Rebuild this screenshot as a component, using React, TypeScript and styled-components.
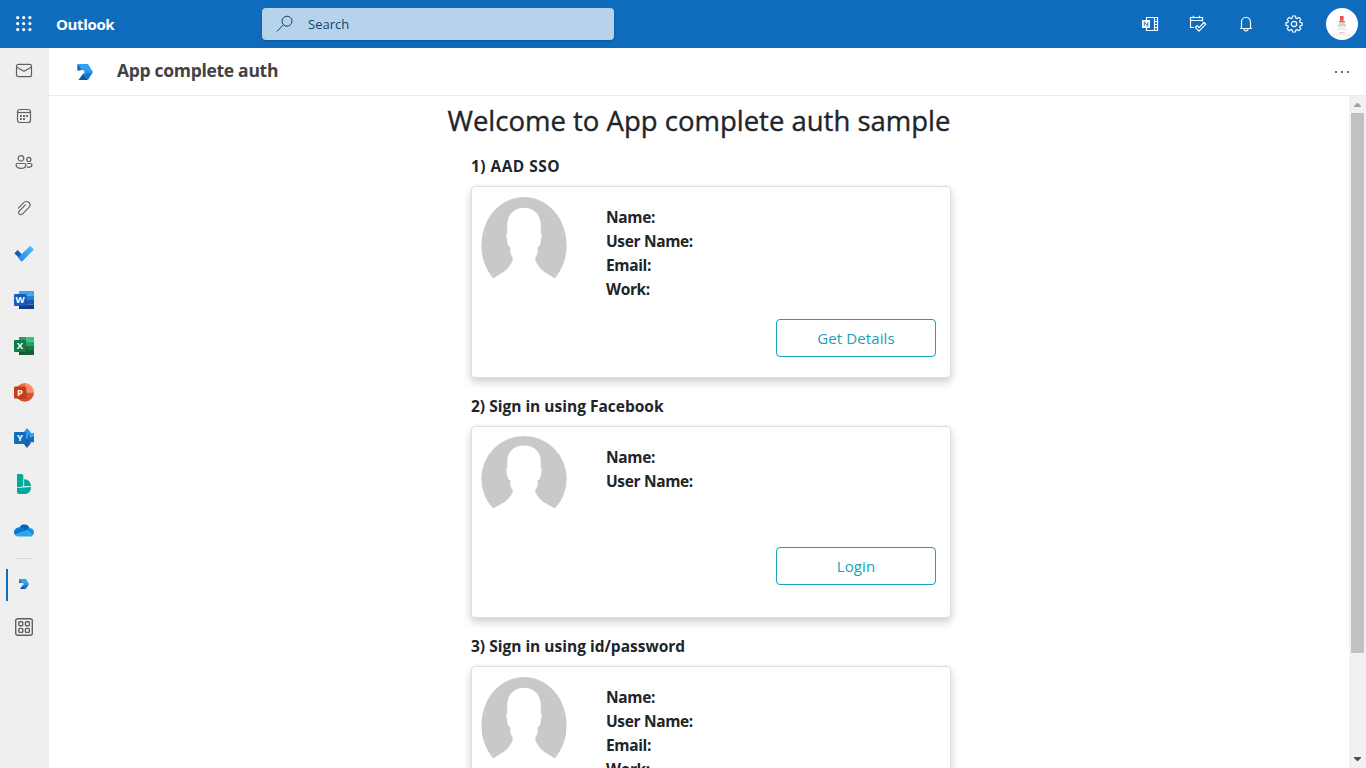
import React from 'react';
import styled, { createGlobalStyle } from 'styled-components';

const Global = createGlobalStyle`
  *, *::before, *::after { box-sizing: border-box; }
  body { margin: 0; overflow: hidden; font-family: "Open Sans", "Noto Sans", sans-serif; color: #212529; background: #fff; }
  svg { display: block; flex: none; }
`;

const Page = styled.div`
  display: flex;
  flex-direction: column;
  width: 1366px;
  height: 768px;
  overflow: hidden;
`;

const Text = styled.span<{ $spacing?: number }>`
  letter-spacing: ${(p) => p.$spacing ?? 0}px;
  white-space: nowrap;
`;

const TopBar = styled.header`
  display: flex;
  align-items: center;
  height: 48px;
  flex: none;
  background: #0f6cbd;
  color: #fff;
`;

const Launcher = styled.div`
  display: flex;
  align-items: center;
  justify-content: center;
  width: 48px;
  height: 48px;
`;

const Brand = styled.div`
  width: 214px;
  padding-left: 8px;
  font-size: 15px;
  font-weight: 700;
  line-height: 22px;
`;

const SearchBox = styled.div`
  display: flex;
  align-items: center;
  gap: 14px;
  width: 352px;
  height: 32px;
  padding-left: 14px;
  border-radius: 4px;
  background: #b7d3eb;
  box-shadow: 0 1px 3px rgba(0, 0, 0, 0.22);
  color: #0f4470;
  font-size: 13px;
  line-height: 20px;
`;

const TopActions = styled.div`
  display: flex;
  margin-left: auto;
  align-items: center;
`;

const TopButton = styled.div`
  display: flex;
  align-items: center;
  justify-content: center;
  width: 48px;
  height: 48px;
`;

const Body = styled.div`
  display: flex;
  flex: 1;
  min-height: 0;
`;

const Rail = styled.nav`
  display: flex;
  flex-direction: column;
  width: 49px;
  flex: none;
  background: #efefef;
  color: #616161;
`;

const RailItem = styled.div<{ $height?: number; $active?: boolean }>`
  display: flex;
  align-items: center;
  justify-content: center;
  flex: none;
  width: 48px;
  height: ${(p) => p.$height ?? 46}px;
  ${(p) => p.$active && `
    width: 42px;
    margin-left: 6px;
    padding: 0 8px 2px 0;
    border-left: 2px solid #0f6cbd;
  `}
`;

const RailDivider = styled.div`
  width: 16px;
  height: 1px;
  flex: none;
  margin: 5px 0 10px 16px;
  background: #d8d8d8;
`;

const Main = styled.main`
  display: flex;
  flex-direction: column;
  flex: 1;
  min-width: 0;
`;

const TitleBar = styled.div`
  display: flex;
  align-items: center;
  height: 48px;
  flex: none;
  padding: 0 16px 0 28px;
  border-bottom: 1px solid #ebebeb;
  color: #424242;
`;

const AppTitle = styled.h1`
  margin: -3px auto 0 24px;
  font-size: 17.5px;
  font-weight: 700;
  line-height: 24px;
`;

const Viewport = styled.div`
  display: flex;
  flex: 1;
  min-height: 0;
`;

const Content = styled.div`
  flex: 1;
  height: 672px;
  overflow: hidden;
`;

const Heading = styled.h2`
  margin: 0;
  padding-top: 8px;
  height: 58px;
  font-size: 27.5px;
  font-weight: 500;
  line-height: 34px;
  text-align: center;
  -webkit-text-stroke: 0.35px #212529;
`;

const Section = styled.section`
  width: 480px;
  margin: 0 0 16px 422px;
`;

const SectionTitle = styled.h3`
  margin: 0 0 8px;
  font-size: 15.5px;
  font-weight: 700;
  line-height: 24px;
`;

const Card = styled.div`
  display: flex;
  flex-direction: column;
  height: 192px;
  border: 1px solid #dfdfdf;
  border-radius: 4px;
  background: #fff;
  box-shadow: 0 4px 8px rgba(0, 0, 0, 0.2);
`;

const CardTop = styled.div<{ $height: number }>`
  display: flex;
  flex: none;
  height: ${(p) => p.$height}px;
  padding-left: 9px;
`;

const AvatarSlot = styled.div<{ $top: number }>`
  width: 125px;
  padding-top: ${(p) => p.$top}px;
`;

const Fields = styled.div`
  display: flex;
  flex-direction: column;
  padding-top: 18px;
  font-size: 15.5px;
  font-weight: 700;
  line-height: 24px;
`;

const OutlineButton = styled.button`
  align-self: flex-end;
  width: 160px;
  height: 38px;
  margin-right: 14px;
  padding: 0;
  border: 1px solid #17a2b8;
  border-radius: 4px;
  background: transparent;
  color: #17a2b8;
  font: 400 15px/24px "Open Sans", sans-serif;
`;

const ScrollTrack = styled.div`
  display: flex;
  flex-direction: column;
  align-items: center;
  justify-content: space-between;
  width: 17px;
  background: #f1f1f1;
`;

const ScrollThumb = styled.div`
  width: 13px;
  height: 540px;
  margin-bottom: auto;
  background: #c1c1c1;
`;

const ScrollArrow = ({ down }: { down?: boolean }) => (
  <svg width="17" height="17" viewBox="0 0 17 17">
    {down ? <path d="M5 6h7v1L9 10H8L5 7z" fill="#505050" /> : <path d="M5 11h7v-1L9 7H8l-3 3z" fill="#a3a3a3" />}
  </svg>
);

const Silhouette = ({ height }: { height: number }) => (
  <svg width="86" height={height} viewBox="-1 0 258 242" preserveAspectRatio="none">
    <ellipse cx="128" cy="144" rx="128" ry="144" fill="#c9c9c9" />
    <path
      d="M36 243L58 229Q72 222 80 212Q88 202 94 190V180Q89 176 87 164V149L82 147Q76 134 75 112L78 106Q76 76 81 64Q92 32 128 32Q164 32 175 64Q180 76 178 106L181 112Q180 134 174 147L169 149V164Q167 176 162 180V190Q168 202 176 212Q184 222 198 229L220 243Z"
      fill="#fff"
    />
  </svg>
);

const LauncherIcon = () => (
  <svg width="16" height="16" viewBox="0 0 16 16" fill="#fff">
    {[1.6, 7.6, 13.6].map((y) => [1.7, 7.7, 13.9].map((x) => <circle key={`${x}-${y}`} cx={x} cy={y} r="1.6" />))}
  </svg>
);

const SearchIcon = () => (
  <svg width="18" height="18" viewBox="0 0 18 18" fill="none" stroke="#0f4470" strokeWidth="1">
    <circle cx="11" cy="6.2" r="5" />
    <path d="M7.3 9.9L.8 16.5" />
  </svg>
);

const NotebookIcon = () => (
  <svg width="18" height="16" viewBox="0 0 18 16">
    <path d="M5.5 4V1.5h11v13h-11V12M13.5 1.5v13M13.5 5.5h3M13.5 8.5h3M13.5 11.5h3" fill="none" stroke="#fff" strokeWidth="1.2" />
    <path d="M1 4h8v8H1z" fill="#fff" />
    <path d="M3.3 10V6l3.4 4V6" fill="none" stroke="#4a8fd0" strokeWidth="1.1" />
  </svg>
);

const DayIcon = () => (
  <svg width="18" height="18" viewBox="0 0 18 18" fill="none" stroke="#fff" strokeWidth="1.2">
    <path d="M5 12.5H1.5v-10h12v4M1.5 5.5h12M4.5 .8v2.5M10.5 .8v2.5" />
    <path d="M6.3 12.4l1.7-1.8 2 2 5-5.1 1.8 1.7-6.8 7z" strokeLinejoin="round" />
  </svg>
);

const BellIcon = () => (
  <svg width="16" height="16" viewBox="0 0 16 16" fill="none" stroke="#fff" strokeWidth="1.15">
    <path d="M3.5 12V6a4.5 4.8 0 0 1 9 0v6M2 12.5h12M6 13a2 1.8 0 0 0 4 0" />
  </svg>
);

const GearIcon = () => (
  <svg width="18" height="18" viewBox="0 0 18 18" fill="none" stroke="#fff" strokeWidth="1.2" strokeLinejoin="round">
    <path d="M7.6 1h2.8l.5 2.1 1.1.5 1.9-1.2 1.9 1.9-1.2 1.9.5 1.1 2 .5v2.5l-2 .5-.5 1.1 1.2 1.9-1.9 1.9-1.9-1.2-1.1.5-.5 2H7.6l-.5-2-1.1-.5-1.9 1.2-1.9-1.9 1.2-1.9-.5-1.1-2-.5V7.8l2-.5.5-1.1-1.2-1.9 1.9-1.9L6 3.6l1.1-.5z" />
    <circle cx="9" cy="9" r="2.7" />
  </svg>
);

const ProfilePicture = () => (
  <svg width="32" height="32" viewBox="0 0 32 32">
    <circle cx="16" cy="16" r="16" fill="#fff" />
    <path d="M14 8h3.6v4.8H14z" fill="#f05252" />
    <path d="M13 13.6h6" stroke="#6b6563" strokeWidth=".9" />
    <path d="M13.5 14h5l.5 3h-6z" fill="#d6d0cb" />
    <path d="M13.5 17l-1 4h7l-1-4z" fill="#f3ede9" />
    <path d="M12.3 18.5l1-2M19.5 18.5l-1-2" stroke="#98918d" strokeWidth=".8" />
    <path d="M15.3 17.6h1.6" stroke="#c9a878" strokeWidth=".9" />
    <path d="M10.5 21.5h11M7 27h18" stroke="#e2dfe1" strokeWidth=".8" />
    <path d="M13 24.9h6" stroke="#f6b0b0" strokeWidth="1.1" />
  </svg>
);

const MailIcon = () => (
  <svg width="18" height="15" viewBox="0 0 18 15" fill="none" stroke="currentColor" strokeWidth="1.2">
    <rect x="1.5" y="1.3" width="15" height="12.4" rx="2" />
    <path d="M1.7 4.3L9 8.2l7.3-3.9" />
  </svg>
);

const CalendarIcon = () => (
  <svg width="16" height="16" viewBox="0 0 16 16" fill="none" stroke="currentColor" strokeWidth="1.2">
    <rect x="1.5" y="1.5" width="13" height="13" rx="2.3" />
    <path d="M1.5 4.5h13" />
    <path d="M4 8h1.8M7.1 8h1.8M10.2 8H12M4 11h1.8M7.1 11h1.8" strokeWidth="1.8" />
  </svg>
);

const PeopleIcon = () => (
  <svg width="18" height="16" viewBox="0 0 18 16" fill="none" stroke="currentColor" strokeWidth="1.2">
    <circle cx="6" cy="4.4" r="2.8" />
    <circle cx="13.8" cy="5.4" r="2.1" />
    <path d="M2.4 9.5h7.2c.8 0 1.3.5 1.3 1.2 0 2.5-2.2 3.7-4.9 3.7s-4.9-1.2-4.9-3.7c0-.7.5-1.2 1.3-1.2zM12 9.5h3.7c.8 0 1.3.4 1.3 1.1 0 1.6-1.3 2.7-3.2 2.7-.8 0-1.5-.2-2-.5" />
  </svg>
);

const ClipIcon = () => (
  <svg width="16" height="16" viewBox="0 0 16 16" fill="none" stroke="currentColor" strokeWidth="1.15" strokeLinecap="round">
    <path d="M2.3 8.1l5.2-5.3c1.8-1.8 4.3-1.6 5.5-.3 1.3 1.3 1.3 3.4 0 4.9l-6.4 6.5c-1.1 1.1-2.5 1-3.3.2-.8-.9-.8-2.2.1-3.2l6-6.1" />
  </svg>
);

const TodoIcon = () => (
  <svg width="20" height="16" viewBox="0 0 20 16">
    <path d="M.4 7.3l3.2-3.2 6.7 6.7-3.2 3.2z" fill="#185abd" />
    <path d="M4 11.6L15.6.4c.4-.3.8-.3 1.2 0l2.6 2.5c.4.4.4.8 0 1.2L8.3 15.2c-.4.4-.8.4-1.2 0z" fill="url(#todoGradient)" />
    <defs>
      <linearGradient id="todoGradient" x1="5" y1="14" x2="18" y2="1" gradientUnits="userSpaceOnUse">
        <stop stopColor="#2787e5" />
        <stop offset="1" stopColor="#50b8fb" />
      </linearGradient>
    </defs>
  </svg>
);

const Letter = styled.text`
  font: 700 9.5px "Open Sans", sans-serif;
  fill: #fff;
  text-anchor: middle;
`;

const WordIcon = () => (
  <svg width="20" height="18" viewBox="0 0 20 18">
    <path d="M5 0h15v4.6H5z" fill="#41a5ee" />
    <path d="M5 4.6h15V9H5z" fill="#2b7cd3" />
    <path d="M5 9h15v4.5H5z" fill="#185abd" />
    <path d="M5 13.5h15V18H5z" fill="#103f91" />
    <path d="M10 3.5h2.7v12H5v-1h5z" fill="#0b3274" opacity=".4" />
    <rect y="3" width="12" height="12" rx="1" fill="#185abd" />
    <Letter x="6" y="12.4">W</Letter>
  </svg>
);

const ExcelIcon = () => (
  <svg width="20" height="18" viewBox="0 0 20 18">
    <path d="M5 0h7.5v9H5z" fill="#21a366" />
    <path d="M12.5 0H20v4.6h-7.5z" fill="#33c481" />
    <path d="M12.5 4.6H20V9h-7.5z" fill="#21a366" />
    <path d="M5 9h15v9H5z" fill="#185c37" />
    <path d="M12.5 9H20v4.5h-7.5z" fill="#107c41" />
    <path d="M10 3.5h2.7v12H5v-1h5z" fill="#0b4527" opacity=".4" />
    <rect y="3" width="12" height="12" rx="1" fill="#107c41" />
    <Letter x="6" y="12.4">X</Letter>
  </svg>
);

const PowerPointIcon = () => (
  <svg width="20" height="19" viewBox="0 0 20 19">
    <path d="M11 0a9.4 9.4 0 0 1 9 9.5h-9z" fill="#ff8f6b" />
    <path d="M11 0v9.5H1.5A9.5 9.5 0 0 1 11 0z" fill="#ed6c47" />
    <path d="M1.5 9.5H20a9.25 9.25 0 0 1-18.5 0z" fill="#d35230" />
    <path d="M10 4h2.7v12H4v-1h6z" fill="#7c2411" opacity=".35" />
    <rect y="3.5" width="12" height="12" rx="1" fill="#c43e1c" />
    <Letter x="6" y="12.9">P</Letter>
  </svg>
);

const VivaIcon = () => (
  <svg width="20" height="20" viewBox="0 0 20 20">
    <path d="M9 5l4-5 4 4.4-4 5.6z" fill="#2b9ae8" />
    <path d="M13 9.5L16 5.2h3.5q.5 0 .5.5v8q0 .5-.5.5H16z" fill="#0f6fc5" />
    <path d="M16 5.2h3.5L20 6v2l-4.5 2z" fill="#3aa0ed" />
    <path d="M9 15l4-5.5 4 5.5-4 5z" fill="#1b5ea9" />
    <rect y="4" width="12" height="12" rx="1" fill="#106ebe" />
    <Letter x="6" y="13.4">Y</Letter>
  </svg>
);

const BookingsIcon = () => (
  <svg width="16" height="20" viewBox="0 0 16 20" fill="#00a99d">
    <path d="M1 0h4.7A1.6 1.6 0 0 1 7.3 1.6V12.2L1 13.4z" />
    <path d="M1 14l14-1.1c0 4.3-2.9 7.1-6.5 7.1H3a2 2 0 0 1-2-2z" />
    <path d="M8.1 5.2c3.8 0 6.5 2.5 6.9 6.8l-6.9.2z" />
  </svg>
);

const OneDriveIcon = () => (
  <svg width="20" height="14" viewBox="0 0 20 14">
    <path d="M5.5 4.2A5.6 5.6 0 0 1 15.6 5L9.8 9z" fill="#0364b8" />
    <path d="M5.5 4.2C2.2 4.5 0 6.8 0 9.2c0 1.1.4 2.1 1 2.8l11-4.6C10.4 5.8 8.4 4.2 5.5 4.2z" fill="#0a77d3" />
    <path d="M12 7.3c1.3-1.2 2.2-2.4 3.8-2.3 2.2.1 4.2 1.9 4.2 4.3 0 1-.4 2-1 2.7z" fill="#1490df" />
    <path d="M1 12l11-4.7 7 4.7c-.8 1-1.8 1.5-3 1.5H4.5A4.5 4.5 0 0 1 1 12z" fill="#28a8ea" />
  </svg>
);

const AppLogo = ({ size }: { size: number }) => (
  <svg width={size} height={size} viewBox="0 0 16 16">
    <path d="M.5 0H11l5 8-7 1-3.6-3.2L.5 6.4z" fill="#36a0f0" />
    <path d="M.5 0L5 6l-4.5.7z" fill="#1368b9" />
    <path d="M16 8l-5 8-5-6.2z" fill="#1478ce" />
    <path d="M6 9.8L11 16H1.5z" fill="#0e57a4" />
    <path d="M9 7l7 1-10 1.8z" fill="#208bdf" />
  </svg>
);

const MoreAppsIcon = () => (
  <svg width="18" height="18" viewBox="0 0 18 18" fill="none" stroke="currentColor" strokeWidth="1.4">
    <rect x=".7" y=".7" width="16.6" height="16.6" rx="2" />
    <rect x="3.8" y="3.8" width="4" height="4" rx="1" />
    <rect x="10.4" y="3.8" width="4" height="4" rx="1" />
    <rect x="3.8" y="10.4" width="4" height="4" rx="1" />
    <rect x="10.4" y="10.4" width="4" height="4" rx="1" />
  </svg>
);

const EllipsisIcon = () => (
  <svg width="16" height="4" viewBox="0 0 16 4" fill="#6b6b6b">
    <path d="M1 1h2v2H1zM7 1h2v2H7zM13 1h2v2h-2z" />
  </svg>
);

const railIcons = [
  MailIcon, CalendarIcon, PeopleIcon, ClipIcon, TodoIcon, WordIcon,
  ExcelIcon, PowerPointIcon, VivaIcon, BookingsIcon, OneDriveIcon,
];

interface SignInSection {
  title: string;
  spacing: number;
  fields: string[];
  action?: string;
  topHeight: number;
  avatarTop: number;
  avatarHeight: number;
}

const sections: SignInSection[] = [
  { title: '1) AAD SSO', spacing: 0.45, fields: ['Name:', 'User Name:', 'Email:', 'Work:'], action: 'Get Details', topHeight: 132, avatarTop: 10, avatarHeight: 81 },
  { title: '2) Sign in using Facebook', spacing: 0, fields: ['Name:', 'User Name:'], action: 'Login', topHeight: 120, avatarTop: 9, avatarHeight: 72 },
  { title: '3) Sign in using id/password', spacing: 0, fields: ['Name:', 'User Name:', 'Email:', 'Work:'], topHeight: 132, avatarTop: 10, avatarHeight: 81 },
];

export default function App() {
  return (
    <Page>
      <Global />
      <TopBar>
        <Launcher><LauncherIcon /></Launcher>
        <Brand><Text $spacing={-0.35}>Outlook</Text></Brand>
        <SearchBox><SearchIcon /><Text>Search</Text></SearchBox>
        <TopActions>
          <TopButton><NotebookIcon /></TopButton>
          <TopButton><DayIcon /></TopButton>
          <TopButton><BellIcon /></TopButton>
          <TopButton><GearIcon /></TopButton>
          <TopButton><ProfilePicture /></TopButton>
        </TopActions>
      </TopBar>
      <Body>
        <Rail>
          {railIcons.map((Icon, i) => (
            <RailItem key={i} $height={i === 0 ? 45 : 46}><Icon /></RailItem>
          ))}
          <RailDivider />
          <RailItem $height={32} $active><AppLogo size={10} /></RailItem>
          <RailItem $height={52}><MoreAppsIcon /></RailItem>
        </Rail>
        <Main>
          <TitleBar>
            <AppLogo size={16} />
            <AppTitle><Text $spacing={-0.3}>App complete auth</Text></AppTitle>
            <EllipsisIcon />
          </TitleBar>
          <Viewport>
            <Content>
              <Heading><Text>Welcome to App complete auth sample</Text></Heading>
              {sections.map((s) => (
                <Section key={s.title}>
                  <SectionTitle><Text $spacing={s.spacing}>{s.title}</Text></SectionTitle>
                  <Card>
                    <CardTop $height={s.topHeight}>
                      <AvatarSlot $top={s.avatarTop}><Silhouette height={s.avatarHeight} /></AvatarSlot>
                      <Fields>{s.fields.map((f) => <Text key={f} $spacing={-0.35}>{f}</Text>)}</Fields>
                    </CardTop>
                    {s.action && <OutlineButton><Text $spacing={0.1}>{s.action}</Text></OutlineButton>}
                  </Card>
                </Section>
              ))}
            </Content>
            <ScrollTrack>
              <ScrollArrow />
              <ScrollThumb />
              <ScrollArrow down />
            </ScrollTrack>
          </Viewport>
        </Main>
      </Body>
    </Page>
  );
}
